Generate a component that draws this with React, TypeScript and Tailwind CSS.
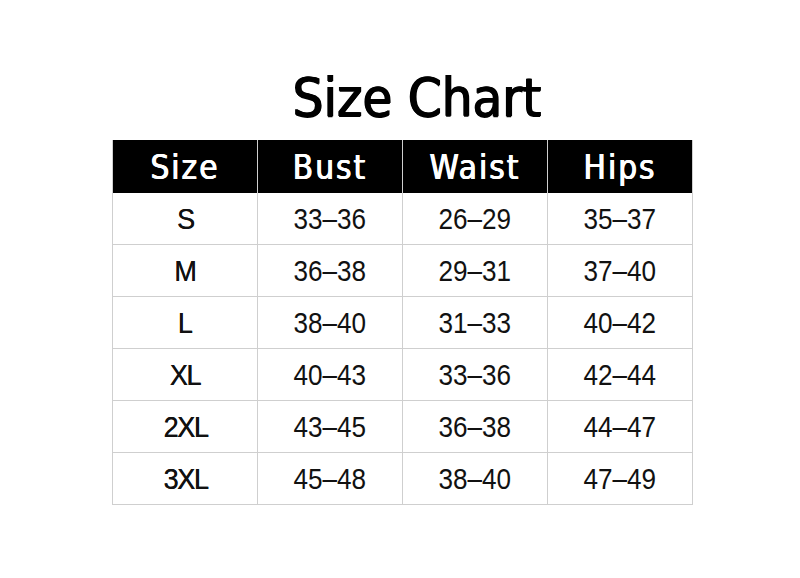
const headers = ['Size', 'Bust', 'Waist', 'Hips'];

const rows = [
  ['S', '33-36', '26-29', '35-37'],
  ['M', '36-38', '29-31', '37-40'],
  ['L', '38-40', '31-33', '40-42'],
  ['XL', '40-43', '33-36', '42-44'],
  ['2XL', '43-45', '36-38', '44-47'],
  ['3XL', '45-48', '38-40', '47-49'],
];

const cond = '"DejaVu Sans", sans-serif';
const helv = '"Liberation Sans", Arial, sans-serif';

export default function App() {
  return (
    <div className="flex h-[578px] w-[800px] flex-col items-center bg-white">
      <h1
        className="mt-[66px] ml-[34px] text-[54px] leading-[64px] font-normal font-stretch-condensed text-black [text-shadow:0.8px_0_0_#000,-0.8px_0_0_#000,0_0.6px_0_#000]"
        style={{ fontFamily: cond }}
      >
        Size Chart
      </h1>
      <div className="mt-[10px] ml-[5px] w-[581px] border-l border-[#cfcfcf]">
        <div className="grid grid-cols-4 bg-black">
          {headers.map((h) => (
            <div
              key={h}
              className="flex h-[53px] items-center justify-center border-r border-[#cfcfcf] pt-[2px] text-[33px] font-normal font-stretch-condensed tracking-[2px] text-white [text-shadow:0.5px_0_0_#fff,-0.5px_0_0_#fff]"
              style={{ fontFamily: cond }}
            >
              {h}
            </div>
          ))}
        </div>
        {rows.map((r) => (
          <div key={r[0]} className="grid grid-cols-4 border-b border-[#cfcfcf]">
            {r.map((c, i) => (
              <div
                key={i}
                className="flex h-[51px] items-center justify-center border-r border-[#cfcfcf] pb-[1px] text-[30px] text-[#111]"
                style={{ fontFamily: helv }}
              >
                {i === 0 ? (
                  <span className="inline-block scale-x-[0.9] tracking-[-1.5px] [text-shadow:0.4px_0_0_#111]">{c}</span>
                ) : (
                  <span className="inline-block scale-x-[0.87]">{c.replace('-', '\u2013')}</span>
                )}
              </div>
            ))}
          </div>
        ))}
      </div>
    </div>
  );
}
